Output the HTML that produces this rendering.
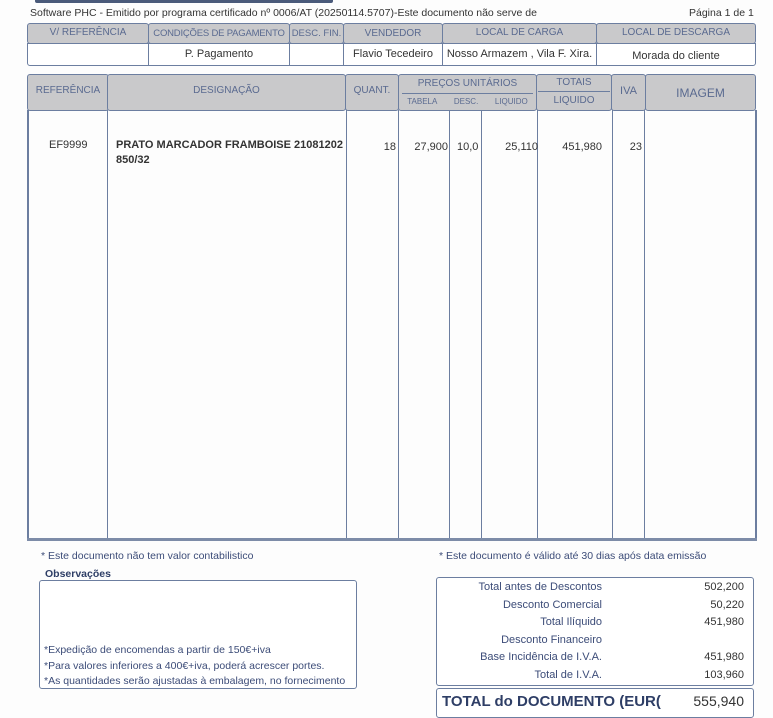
<!DOCTYPE html>
<html><head><meta charset="utf-8"><style>
*{margin:0;padding:0;box-sizing:border-box}
body{width:773px;height:700px;overflow:hidden;background:#fdfdfd;font-family:"Liberation Sans",Arial,sans-serif;position:relative;color:#333}
.a{position:absolute}
.h{position:absolute;background:#c9c9cb;border:1.5px solid #6c7ea0;border-radius:3px;color:#5a6a90;font-size:10px;text-align:center;white-space:nowrap;overflow:hidden}
.w{position:absolute;background:#fff;border:1.5px solid #6c7ea0;font-size:11px;text-align:center;color:#333;white-space:nowrap}
.vl{position:absolute;top:110px;height:430px;width:1px;background:#6c7ea0}
.t{position:absolute;font-size:11px;color:#333;white-space:nowrap}
.r{position:absolute;font-size:11px;color:#3c4c78;text-align:right;white-space:nowrap}
</style></head><body>
<div class="a" style="left:35px;top:0;width:298px;height:3px;background:#4a5a7a;border-radius:0 0 2px 2px"></div>
<div class="t" style="left:30px;top:7px;font-size:10.5px">Software PHC - Emitido por programa certificado nº 0006/AT (20250114.5707)-Este documento não serve de</div>
<div class="t" style="left:689px;top:7px;font-size:10.5px">Página 1 de 1</div>

<div class="h" style="left:27px;top:23px;width:122px;height:21px;line-height:18px">V/ REFERÊNCIA</div>
<div class="h" style="left:148px;top:23px;width:142px;height:21px;line-height:20px;font-size:9.5px;letter-spacing:-0.2px">CONDIÇÕES DE PAGAMENTO</div>
<div class="h" style="left:289px;top:23px;width:55px;height:21px;line-height:20px;font-size:9.5px">DESC. FIN.</div>
<div class="h" style="left:343px;top:23px;width:100px;height:21px;line-height:20px">VENDEDOR</div>
<div class="h" style="left:442px;top:23px;width:155px;height:21px;line-height:18px">LOCAL DE CARGA</div>
<div class="h" style="left:596px;top:23px;width:160px;height:21px;line-height:18px">LOCAL DE DESCARGA</div>
<div class="w" style="left:27px;top:43px;width:122px;height:23px;border-radius:0 0 0 3px"></div>
<div class="w" style="left:148px;top:43px;width:142px;height:23px;line-height:20px">P. Pagamento</div>
<div class="w" style="left:289px;top:43px;width:55px;height:23px"></div>
<div class="w" style="left:343px;top:43px;width:100px;height:23px;line-height:20px">Flavio Tecedeiro</div>
<div class="w" style="left:442px;top:43px;width:155px;height:23px;line-height:20px">Nosso Armazem , Vila F. Xira.</div>
<div class="w" style="left:596px;top:43px;width:160px;height:23px;line-height:24px;border-radius:0 0 3px 0">Morada do cliente</div>

<div class="h" style="left:27px;top:74px;width:82px;height:37px;line-height:32px">REFERÊNCIA</div>
<div class="h" style="left:107px;top:74px;width:239px;height:37px;line-height:32px">DESIGNAÇÃO</div>
<div class="h" style="left:345px;top:74px;width:54px;height:37px;line-height:32px">QUANT.</div>
<div class="h" style="left:398px;top:74px;width:139px;height:37px">
 <div style="line-height:18px;border-bottom:1px solid #6c7ea0;margin:0 3px">PREÇOS UNITÁRIOS</div>
 <div style="font-size:8px;line-height:15px;display:flex;justify-content:space-around"><span>TABELA</span><span>DESC.</span><span>LIQUIDO</span></div>
</div>
<div class="h" style="left:536px;top:74px;width:76px;height:37px">
 <div style="line-height:16px;border-bottom:1px solid #6c7ea0;margin:0 1px">TOTAIS</div>
 <div style="line-height:18px">LIQUIDO</div>
</div>
<div class="h" style="left:611px;top:74px;width:35px;height:37px;line-height:32px;font-size:11px">IVA</div>
<div class="h" style="left:645px;top:74px;width:111px;height:37px;line-height:36px;font-size:12px">IMAGEM</div>

<div class="vl" style="left:27px;width:1.5px"></div>
<div class="vl" style="left:107px"></div>
<div class="vl" style="left:346px"></div>
<div class="vl" style="left:398px"></div>
<div class="vl" style="left:449px"></div>
<div class="vl" style="left:481px"></div>
<div class="vl" style="left:537px"></div>
<div class="vl" style="left:612px"></div>
<div class="vl" style="left:644px"></div>
<div class="vl" style="left:755px;width:1.5px"></div>
<div class="a" style="left:27px;top:538px;width:730px;height:3px;background:#7d8ca8"></div>

<div class="t" style="left:49px;top:139px">EF9999</div>
<div class="t" style="left:116px;top:138px;font-weight:bold;line-height:15px">PRATO MARCADOR FRAMBOISE 21081202<br>850/32</div>
<div class="t" style="left:370px;top:141px;width:26px;text-align:right">18</div>
<div class="t" style="left:400px;top:141px;width:48px;text-align:right">27,900</div>
<div class="t" style="left:457px;top:141px">10,0</div>
<div class="t" style="left:483px;top:141px;width:55px;text-align:right">25,110</div>
<div class="t" style="left:540px;top:141px;width:62px;text-align:right">451,980</div>
<div class="t" style="left:612px;top:141px;width:30px;text-align:right">23</div>

<div class="t" style="left:41px;top:550px;font-size:10.5px;color:#3c4c78">* Este documento não tem valor contabilistico</div>
<div class="t" style="left:439px;top:550px;font-size:10.5px;color:#3c4c78">* Este documento é válido até 30 dias após data emissão</div>
<div class="t" style="left:45px;top:568px;font-size:10.5px;font-weight:bold;color:#2e3e66">Observações</div>
<div class="a" style="left:39px;top:580px;width:318px;height:109px;border:1.5px solid #6c7ea0;border-radius:3px;background:#fff"></div>
<div class="t" style="left:44px;top:643px;font-size:10.5px;line-height:15.5px;color:#3c4c78">*Expedição de encomendas a partir de 150€+iva<br>*Para valores inferiores a 400€+iva, poderá acrescer portes.<br>*As quantidades serão ajustadas à embalagem, no fornecimento</div>

<div class="a" style="left:436px;top:577px;width:318px;height:109px;border:1.5px solid #6c7ea0;border-radius:3px;background:#fff"></div>
<div class="r" style="left:430px;top:579px;width:172px;line-height:17.5px">Total antes de Descontos<br>Desconto Comercial<br>Total Ilíquido<br>Desconto Financeiro<br>Base Incidência de I.V.A.<br>Total de I.V.A.</div>
<div class="r" style="left:660px;top:579px;width:84px;line-height:17.5px;color:#333">502,200<br>50,220<br>451,980<br>&nbsp;<br>451,980<br>103,960</div>
<div class="a" style="left:436px;top:688px;width:318px;height:30px;border:1.5px solid #6c7ea0;border-radius:3px;background:#fff"></div>
<div class="t" style="left:442px;top:693px;font-size:15px;font-weight:bold;color:#2e3e66">TOTAL do DOCUMENTO (EUR(</div>
<div class="t" style="left:660px;top:693px;width:84px;text-align:right;font-size:14px;color:#333">555,940</div>
</body></html>
